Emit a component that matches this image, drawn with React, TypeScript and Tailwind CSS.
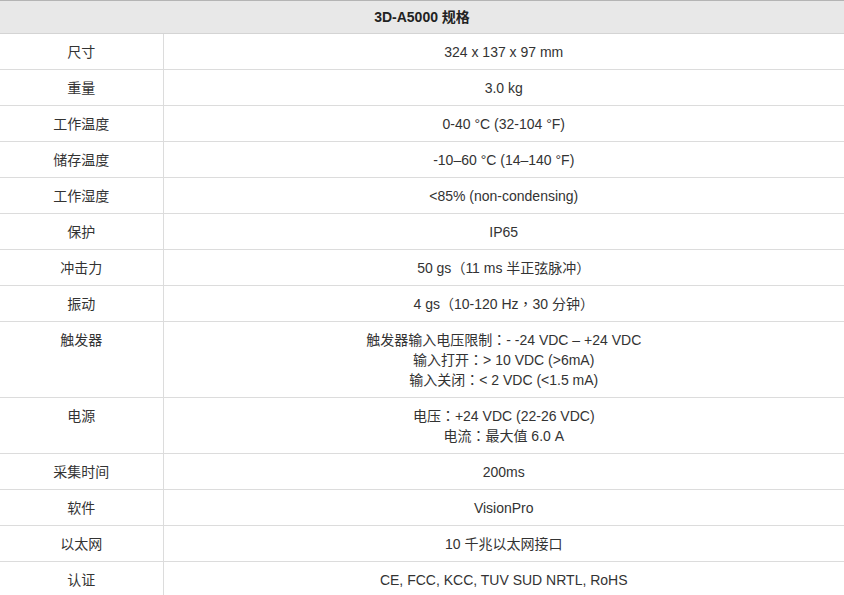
const rows: { label: string; value: string[] }[] = [
  { label: '尺寸', value: ['324 x 137 x 97 mm'] },
  { label: '重量', value: ['3.0 kg'] },
  { label: '工作温度', value: ['0-40 °C (32-104 °F)'] },
  { label: '储存温度', value: ['-10–60 °C (14–140 °F)'] },
  { label: '工作湿度', value: ['<85% (non-condensing)'] },
  { label: '保护', value: ['IP65'] },
  { label: '冲击力', value: ['50 gs（11 ms 半正弦脉冲）'] },
  { label: '振动', value: ['4 gs（10-120 Hz，30 分钟）'] },
  {
    label: '触发器',
    value: [
      '触发器输入电压限制：- -24 VDC – +24 VDC',
      '输入打开：> 10 VDC (>6mA)',
      '输入关闭：< 2 VDC (<1.5 mA)',
    ],
  },
  { label: '电源', value: ['电压：+24 VDC (22-26 VDC)', '电流：最大值 6.0 A'] },
  { label: '采集时间', value: ['200ms'] },
  { label: '软件', value: ['VisionPro'] },
  { label: '以太网', value: ['10 千兆以太网接口'] },
  { label: '认证', value: ['CE, FCC, KCC, TUV SUD NRTL, RoHS'] },
];

// full-width punctuation is drawn centred in the original, as TC fonts do
function Line({ text }: { text: string }) {
  const parts = text.split(/([：，（）])/);
  return (
    <div className="h-[20px]">
      {parts.map((p, i) =>
        /^[：，（）]$/.test(p) ? (
          <span key={i} className="leading-none font-['Noto_Sans_CJK_TC',sans-serif]">
            {p}
          </span>
        ) : (
          <span key={i}>{p}</span>
        )
      )}
    </div>
  );
}

export default function App() {
  return (
    <div className="w-[844px] h-[595px] overflow-hidden bg-white text-[14px] leading-[20px] text-[#333] font-['Liberation_Sans','Noto_Sans_CJK_SC',sans-serif]">
      <table className="w-full border-collapse">
        <thead>
          <tr>
            <th
              colSpan={2}
              className="h-[33px] bg-[#e8e8e8] border-t border-t-[#b4b4b4] border-b border-b-[#d4d4d4] font-bold text-[#222] text-center align-middle p-0"
            >
              3D-A5000 规格
            </th>
          </tr>
        </thead>
        <tbody>
          {rows.map((row) => (
            <tr key={row.label}>
              <td className="w-[163px] border-r border-b border-[#dcdcdc] text-center align-top pt-[8px] pb-[7px] px-2">
                {row.label}
              </td>
              <td className="border-b border-[#dcdcdc] text-center align-top pt-[8px] pb-[7px] px-2">
                {row.value.map((line, i) => (
                  <Line key={i} text={line} />
                ))}
              </td>
            </tr>
          ))}
        </tbody>
      </table>
    </div>
  );
}
